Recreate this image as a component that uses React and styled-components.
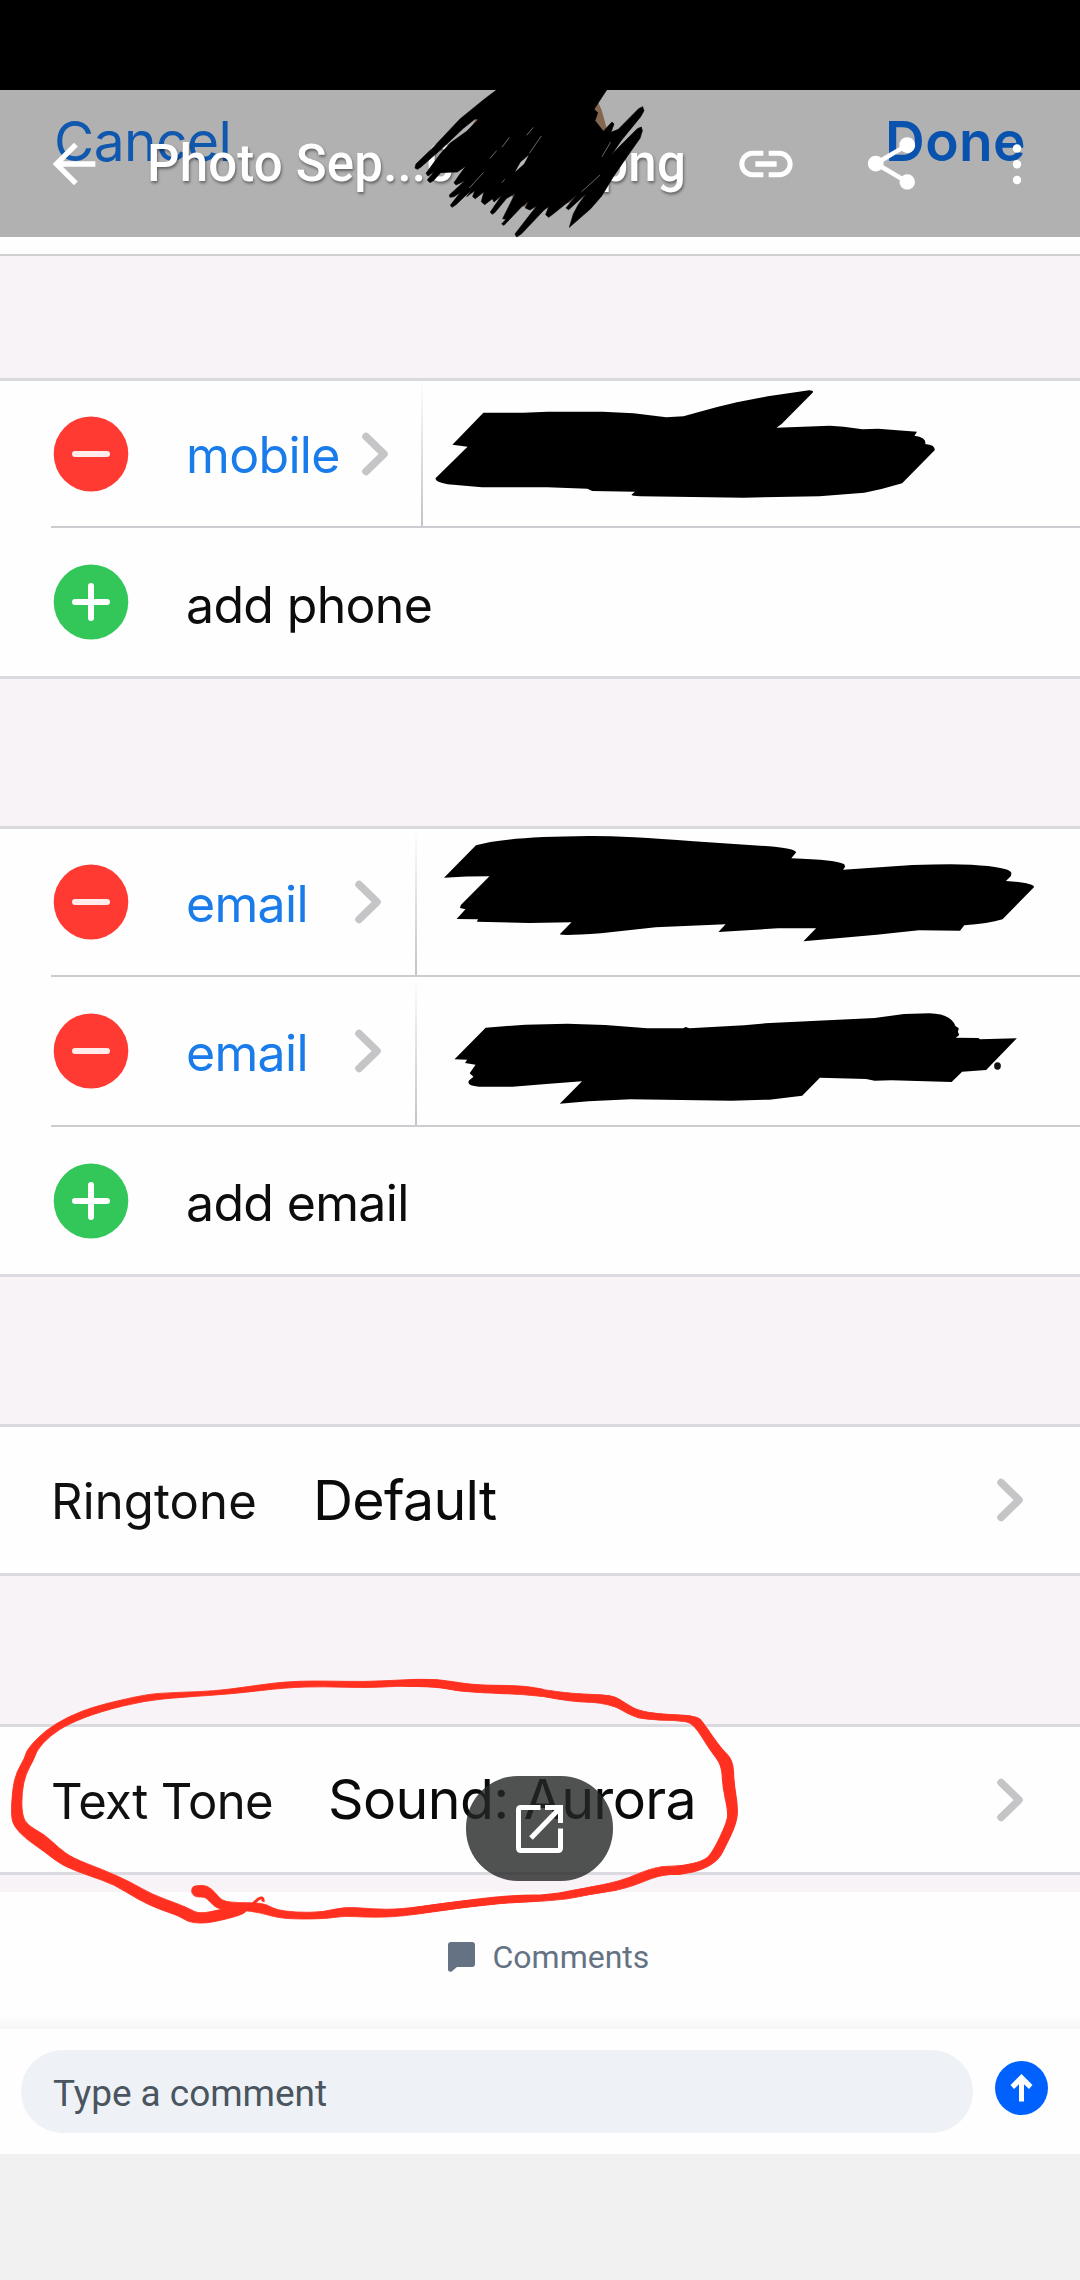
import React from "react";
import styled, { createGlobalStyle } from "styled-components";
import { MdArrowBack, MdLink, MdShare } from "react-icons/md";

const GlobalStyle = createGlobalStyle`
  * { box-sizing: border-box; }
  body { margin: 0; background: #f1f1f1; }
`;

const Screen = styled.main`
  position: relative;
  width: 1080px;
  height: 2280px;
  display: flex;
  flex-direction: column;
  overflow: hidden;
  background: #f1f1f1;
  font-family: Inter, "Open Sans", sans-serif;
  white-space: nowrap;
`;

const StatusBar = styled.div`
  height: 90px;
  flex: none;
  background: #000;
`;

const Viewer = styled.section`
  position: relative;
  height: 1802px;
  flex: none;
  display: flex;
  flex-direction: column;
  background: #f7f3f7;
`;

const ContactNav = styled.div`
  height: 166px;
  flex: none;
  display: flex;
  justify-content: space-between;
  align-items: flex-start;
  padding: 0 54px 0 54px;
  background: #fefefe;
  border-bottom: 2px solid #cfcfd1;
`;

const NavAction = styled.span`
  font-size: 55px;
  line-height: 103px;
  font-weight: ${(p) => (p.$strong ? 600 : 400)};
  letter-spacing: ${(p) => (p.$strong ? "0.4px" : "-0.51px")};
  color: ${(p) => (p.$strong ? "#0e77fb" : "#187efa")};
`;

const Toolbar = styled.header`
  position: absolute;
  inset: 0 0 auto 0;
  height: 147px;
  display: flex;
  align-items: center;
  padding-left: 42px;
  background: rgba(0, 0, 0, 0.3);
  color: #fff;
  svg { flex: none; display: block; }
`;

const FileName = styled.div`
  width: 539px;
  margin: 0 48px 0 41px;
  display: flex;
  justify-content: space-between;
  font: 500 51px/147px Roboto, sans-serif;
  letter-spacing: 0.16px;
  text-shadow: 1px 2px 3px rgba(0, 0, 0, 0.45);
`;

const ToolGap = styled.span`
  width: 62px;
  flex: none;
`;

const Group = styled.div`
  flex: none;
  margin-top: ${(p) => p.$gap}px;
  border-top: 3px solid #dadade;
  border-bottom: 3px solid #dadae0;
  background: #fefefe;
`;

const Row = styled.div`
  height: ${(p) => p.$h}px;
  display: flex;
  align-items: center;
  margin-left: 51px;
  border-bottom: ${(p) => (p.$last ? "none" : "2px solid #cbcbd0")};
`;

const RoundBadge = styled.svg`
  width: 76px;
  height: 76px;
  margin-left: 2px;
  flex: none;
  display: block;
`;

const FieldLabel = styled.span`
  width: ${(p) => (p.$w ? p.$w + "px" : "auto")};
  margin-left: 57px;
  padding-top: ${(p) => (p.$link ? 3 : 5)}px;
  font-size: 50px;
  line-height: 60px;
  letter-spacing: -0.67px;
  color: ${(p) => (p.$link ? "#1a7bea" : "#0c0c0c")};
`;

const ChevronIcon = styled.svg`
  width: 34px;
  height: 50px;
  flex: none;
  display: block;
  fill: none;
  stroke: #c5c5c7;
  stroke-width: 7.5;
  stroke-linecap: round;
  stroke-linejoin: round;
`;

const FieldDivider = styled.span`
  align-self: stretch;
  width: 2px;
  margin-left: ${(p) => p.$gap}px;
  background: linear-gradient(#fefefe, #e2e2e5 45%, #c3c3c8);
`;

const SettingRow = styled(Row)`
  margin-left: 0;
  padding-right: 53px;
  padding-left: 51px;
`;

const SettingName = styled.span`
  width: ${(p) => p.$w}px;
  padding-top: 4px;
  font-size: 49px;
  line-height: 60px;
  letter-spacing: ${(p) => p.$track}px;
  color: #101010;
`;

const SettingValue = styled.span`
  flex: 1;
  padding-bottom: 1px;
  font-size: 55.5px;
  line-height: 66px;
  letter-spacing: ${(p) => p.$track}px;
  color: #0a0a0a;
`;

const CommentsHeader = styled.div`
  height: 137px;
  flex: none;
  display: flex;
  align-items: flex-start;
  padding: 48px 0 0 448px;
  background: linear-gradient(#fefefe 0 122px, #f6f6f6 137px);
  color: #647283;
  font: 400 32px/34px Roboto, sans-serif;
`;

const BubbleIcon = styled.svg`
  width: 27px;
  height: 30px;
  margin: 2px 17.5px 0 0;
  fill: #647283;
`;

const Composer = styled.div`
  height: 125px;
  flex: none;
  display: flex;
  align-items: flex-start;
  padding: 21px 32px 21px 21px;
  background: #fefefe;
`;

const CommentField = styled.div`
  width: 952px;
  height: 83px;
  padding: 2px 0 0 32px;
  border-radius: 42px;
  background: #eef2f6;
  color: #4a5560;
  font: 400 37px/83px Roboto, sans-serif;
  letter-spacing: -0.05px;
`;

const SendButton = styled.button`
  width: 53px;
  height: 54px;
  margin: 10.5px 0 0 22px;
  padding: 0;
  border: 0;
  border-radius: 50%;
  background: #0061fe;
  svg { display: block; }
`;

const OpenButton = styled.button`
  position: absolute;
  left: 466px;
  top: 1776px;
  width: 147px;
  height: 105px;
  padding: 0;
  border: 0;
  border-radius: 52px;
  display: flex;
  justify-content: center;
  align-items: center;
  background: rgba(36, 37, 38, 0.8);
`;

const Markup = styled.svg`
  position: absolute;
  left: 0;
  top: 0;
  width: 1080px;
  height: 2280px;
  pointer-events: none;
`;

// Turns a list of points into a closed curve that rounds every corner.
const closedCurve = (text) => {
  const p = text.trim().split(/\s+/).map((s) => s.split(",").map(Number));
  const mid = (a, b) => `${(a[0] + b[0]) / 2},${(a[1] + b[1]) / 2}`;
  let d = `M${mid(p[p.length - 1], p[0])}`;
  p.forEach((q, i) => {
    d += `Q${q[0]},${q[1]} ${mid(q, p[(i + 1) % p.length])}`;
  });
  return d + "Z";
};

const circleLeft = closedCurve(`1580,840 1568,838 1510,829 1370,828 1270,809 1160,813 1060,818 950,816 870,816 790,822 660,841 580,847 460,851 400,860 280,888 200,918 130,960
  78,1015 72,1040 48,1080 36,1130 32,1210 42,1240 76,1275 130,1312 180,1352 260,1382 330,1406 400,1450 460,1478 520,1498 545,1515 580,1520 620,1516 700,1496 722,1480
  720,1462 640,1480 580,1492 550,1478 530,1468 440,1435 380,1400 300,1364 210,1330 170,1300 130,1262 80,1235 64,1205 63,1140 75,1085 98,1045 108,1016 145,975 200,940 290,905 420,873
  530,863 680,853 830,835 940,832 1060,836 1180,830 1265,831 1350,848 1520,850 1568,859 1580,860`);
const circleTail = closedCurve(`575,1409 602,1410 625,1430 645,1455 690,1460 765,1460 800,1480 860,1488 940,1487 1000,1471 1080,1478 1160,1479 1280,1463 1400,1447 1480,1439 1580,1436
  1580,1456 1480,1457 1340,1474 1160,1501 1060,1502 1000,1498 940,1507 820,1507 760,1490 700,1480 635,1480 610,1458 595,1442 570,1444 556,1434 557,1414`);
const circleRight = closedCurve(`-10,61 80,57 155,75 280,79 400,102 490,104 520,130 550,152 600,162 685,167 700,190 740,265 768,300 770,370 779,440 776,490 750,560 735,598
  700,628 650,644 600,644 520,687 440,703 370,721 250,728 150,742 -10,769 -10,749 150,722 250,709 350,704 420,685 510,664 590,618 650,619 700,602 720,580 755,485
  756,450 744,380 742,315 715,270 678,192 650,182 580,180 540,172 485,130 390,124 310,104 150,97 80,79 -10,80`);

const titleScribble = `M292,88 L250,120 180,177 100,262 48,312 45,324 52,328 62,322 130,262 190,205 225,177 236,178
  200,214 150,250 120,283 78,340 84,348 102,335 82,360 90,368 100,362 122,338 145,337 172,336 198,318 180,342 162,368 168,375
  195,362 148,405 150,412 162,410 182,396 151,436 156,442 168,434 212,392 200,410 224,392 218,410 226,416 252,395 244,425
  254,434 277,416 282,426 306,405 271,456 276,463 284,458 320,415 346,400 308,476 318,478 305,492 312,496 365,440 386,424
  376,444 390,450 412,436 385,470 345,522 350,531 364,522 430,452 447,438 437,464 446,472 462,460 530,405 498,444 506,449
  560,400 536,432 520,462 508,502 572,446 605,408 640,350 684,286 720,235 727,212 724,201 712,206 660,258 634,285 665,240 722,170
  732,152 728,140 716,146 655,208 633,217 642,192 636,186 610,214 585,182 593,158 582,148 620,90Z`;

const mobileMask = `M184,128 L300,128 370,125 530,125 620,130 715,142 765,139 860,112 920,97 1010,79 1130,61 Q1145,62 1140,68
  L1050,162 1035,173 1190,167 1230,170 1285,178 1330,176 1443,185 1436,197 Q1472,203 1467,222 Q1495,224 1495,240 L1400,340
  1340,357 1290,368 1160,379 940,383 640,379 Q612,378 614,374 L624,365 500,363 486,356 370,352 180,352 80,343 Q44,336 45,325
  L138,230 94,224Z`;
const emailMask = `M133,106 Q200,80 400,78 Q480,77 650,94 L820,108 Q896,115 893,128 L882,145 Q990,150 1008,163 L1010,170 1005,179
  1170,165 Q1260,161 1310,164 Q1400,171 1405,188 L1404,198 1392,213 Q1455,218 1459,231 L1384,328 Q1350,341 1293,346 L1283,362
  1185,361 1085,374 911,394 941,355 850,355 709,366 726,343 560,352 430,370 Q340,378 332,373 L360,337 260,339 135,335 138,328
  87,327 108,298 95,294 97,285 165,199Q110,199 57,203Z`;
const secondEmailMask = `M156,653 L250,644 350,641 440,645 540,655 625,655 631,651 640,655 770,646 820,640 1080,624 1150,612 1210,610
  Q1262,612 1272,648 L1280,655 1278,665 1281,675 1273,683 1327,684 1330,688 1418,685 1345,780 1288,785 1263,816 1120,811
  1080,812 1060,807 950,803 908,857 830,869 740,872 500,868 400,874 332,881 385,814 300,822 220,830 140,830 Q110,828 116,812
  L127,800 118,790 132,764 107,759 112,749 82,748Z`;

const Badge = ({ add }) => (
  <RoundBadge viewBox="0 0 76 76">
    <ellipse cx="38" cy="38" rx="37.3" ry="37.6" fill={add ? "#33c75a" : "#ff3a32"} />
    <path
      d={add ? "M22 38H54M38 22V54" : "M22 38H54"}
      stroke={add ? "#fff" : "#ffeceb"}
      strokeWidth="6"
      strokeLinecap="round"
    />
  </RoundBadge>
);

const Chevron = () => (
  <ChevronIcon viewBox="0 0 34 50">
    <path d="M8 7.5L26 25L8 42.5" />
  </ChevronIcon>
);

const ContactField = ({ label, labelWidth, dividerGap, height }) => (
  <Row $h={height}>
    <Badge />
    <FieldLabel $link $w={labelWidth}>{label}</FieldLabel>
    <Chevron />
    <FieldDivider $gap={dividerGap} />
  </Row>
);

const AddField = ({ label, height }) => (
  <Row $h={height} $last>
    <Badge add />
    <FieldLabel>{label}</FieldLabel>
  </Row>
);

export default function App() {
  return (
    <Screen>
      <GlobalStyle />
      <StatusBar />
      <Viewer>
        <ContactNav>
          <NavAction>Cancel</NavAction>
          <NavAction $strong>Done</NavAction>
        </ContactNav>

        <Group $gap={122}>
          <ContactField label="mobile" labelWidth={172} dividerGap={29} height={147} />
          <AddField label="add phone" height={148} />
        </Group>

        <Group $gap={147}>
          <ContactField label="email" labelWidth={165} dividerGap={30} height={148} />
          <ContactField label="email" labelWidth={165} dividerGap={30} height={150} />
          <AddField label="add email" height={147} />
        </Group>

        <Group $gap={147}>
          <SettingRow $h={146} $last>
            <SettingName $w={262} $track={0.12}>Ringtone</SettingName>
            <SettingValue $track={-0.7}>Default</SettingValue>
            <Chevron />
          </SettingRow>
        </Group>

        <Group $gap={148}>
          <SettingRow $h={145} $last>
            <SettingName $w={277} $track={-0.61}>Text Tone</SettingName>
            <SettingValue $track={-0.65}>Sound: Aurora</SettingValue>
            <Chevron />
          </SettingRow>
        </Group>

        <Toolbar>
          <MdArrowBack size={64} />
          <FileName>
            <span>Photo Sep...0</span>
            <span>.png</span>
          </FileName>
          <MdLink size={64} />
          <ToolGap />
          <MdShare size={63} />
          <ToolGap />
          <svg width="64" height="64" viewBox="0 0 64 64" fill="currentColor">
            <circle cx="32" cy="16.5" r="4.2" />
            <circle cx="32" cy="32.3" r="4.2" />
            <circle cx="32" cy="48" r="4.2" />
          </svg>
        </Toolbar>
      </Viewer>

      <CommentsHeader>
        <BubbleIcon viewBox="0 0 27 30">
          <path d="M3 0H24Q27 0 27 3V22Q27 25 24 25H9L4 29.3Q2.5 30.500 0.500 29Q0 28.500 0 27V3Q0 0 3 0Z" />
        </BubbleIcon>
        Comments
      </CommentsHeader>
      <Composer>
        <CommentField>Type a comment</CommentField>
        <SendButton aria-label="Send">
          <svg width="53" height="54" viewBox="0 0 53 54" fill="#fff">
            <path d="M26.500 13L37.500 24L34 28L29 23.300V40.500H24V23.300L19 28L15.500 24Z" />
          </svg>
        </SendButton>
      </Composer>

      <Markup viewBox="0 0 1080 2280">
        <g transform="translate(400 60) scale(.33333)">
          <path d="M335,90H365L345,120Z M560,105L582,100L605,150L620,205L600,222L570,170Z" fill="#84664f" />
          <path d="M320,395L460,380L530,370L520,425L440,445L370,440Z" fill="#7c6558" />
          <path d="M230,175L250,170L205,212Z" fill="#7a5c47" />
          <path d={titleScribble} stroke="#000" strokeWidth="2" strokeLinejoin="round" />
          <path d="M345,336L362,306L386,286L372,312Z" fill="#b8b8b8" />
          <path
            d="M388,280L424,228M380,226L400,202M306,262L328,232M270,295L290,272M306,368L314,358M208,384L250,338M545,395L600,345M606,290L632,246"
            stroke="#8d8d8d"
            strokeWidth="2.2"
            fill="none"
          />
        </g>
        <g transform="translate(420 370) scale(.34439 .33333)">
          <path d={mobileMask} />
        </g>
        <g transform="translate(420 810) scale(.42092 .33333)">
          <path d={emailMask} />
          <path d={secondEmailMask} />
          <ellipse cx="1372" cy="768" rx="8" ry="11" fill="#111" />
        </g>
        <g fill="#ff3020" stroke="#ff3020" strokeWidth="2.5">
          <g transform="translate(0 1400) scale(.34439)">
            <path d={circleLeft} />
            <path d={circleTail} />
            <path d="M728,1472Q750,1444 760,1446Q765,1448 764,1457" fill="none" strokeWidth="9" />
          </g>
          <path transform="translate(400 1660) scale(.43367 .33333)" d={circleRight} />
        </g>
      </Markup>

      <OpenButton aria-label="Open">
        <svg width="49" height="49" viewBox="0 0 49 49" fill="none" stroke="#fff" strokeWidth="5">
          <path d="M25.500 3.500H6Q3.500 3.500 3.500 6V44Q3.500 46.500 6 46.500H43Q45.500 46.500 45.500 44V24.500" />
          <path d="M30 3.500H48M45.500 1V19" />
          <path d="M44 5L16 34" />
        </svg>
      </OpenButton>
    </Screen>
  );
}
